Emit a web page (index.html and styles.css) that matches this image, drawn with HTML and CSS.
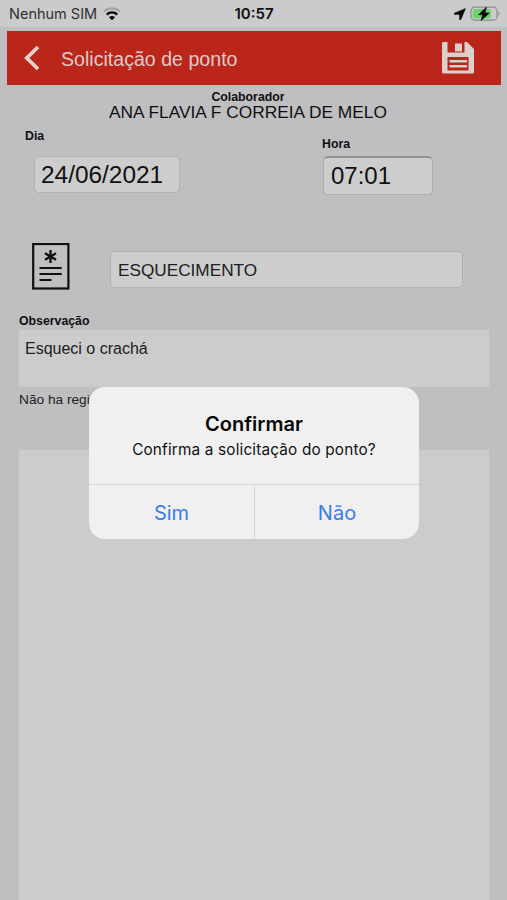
FILE: index.html
```
<!DOCTYPE html>
<html lang="pt-BR">
<head>
<meta charset="utf-8">
<title>Solicitação de ponto</title>
<link rel="stylesheet" href="styles.css">
</head>
<body>
<div class="screen">
  <div class="status">
    <div class="carrier"><span>Nenhum SIM</span>
      <svg width="18" height="14" viewBox="0 0 18 14" fill="none"><path d="M1 4.500C5.500 .2 12.500.2 17 4.500" stroke="#a3a3a3" stroke-width="2.300"/><path d="M3.700 7.600C6.800 4.800 11.200 4.800 14.300 7.600" stroke="#080808" stroke-width="2.500"/><path d="M6 10.200Q9 7.700 12 10.200L9 13.300Z" fill="#080808"/></svg>
    </div>
    <time class="clock">10:57</time>
    <div class="power">
      <svg width="12" height="12" viewBox="0 0 12 12"><path d="M11.500.5L.2 5.200L.5 6.500H5.500V11.500L6.800 11.700Z" fill="#080808" stroke="#080808" stroke-width=".5"/></svg>
      <svg width="31" height="16" viewBox="0 0 31 16"><rect x="1" y="1.200" width="26" height="13" rx="3.800" fill="#cbcbcb" stroke="#8d8d8d" stroke-width="1.200"/><rect x="2.800" y="3" width="18" height="9.400" rx="2" fill="#69d36c"/><path d="M28.500 5.500Q31 7.700 28.500 10Z" fill="#8d8d8d"/><path d="M16.500 1L8.500 8.700H12.600L11 14.800L19.400 6.900H15Z" fill="#080808" stroke="#080808" stroke-width=".5"/></svg>
    </div>
  </div>

  <header class="bar">
    <svg class="back" width="18" height="26" viewBox="0 0 18 26"><path d="M15 2L3.800 13L15 24" fill="none" stroke="#dfd3d2" stroke-width="3.800"/></svg>
    <h1>Solicitação de ponto</h1>
    <svg class="save" width="32" height="32" viewBox="0 0 32 32"><path fill="#dccfcd" fill-rule="evenodd" d="M1 0H5.500V10.500H22.500V0H25L32 7V30.500L31 31.500H1L0 30.500V1ZM5.500 15V28.500H26.500V15Z"/><path fill="#dccfcd" d="M13 1.500H20V9.500H13ZM7.500 18H25V20.500H7.500ZM7.500 23H25V25.500H7.500Z"/></svg>
  </header>

  <main>
    <div class="person"><b>Colaborador</b><span>ANA FLAVIA F CORREIA DE MELO</span></div>
    <div class="when">
      <div class="day"><b>Dia</b><div class="field date">24/06/2021</div></div>
      <div class="hour"><b>Hora</b><div class="field time">07:01</div></div>
    </div>
    <div class="reason">
      <svg width="38" height="48" viewBox="0 0 38 48" fill="none" stroke="#101012"><rect x="1.200" y="1" width="35.200" height="44.500" stroke-width="2.200"/><path d="M18.500 7V20M13 10.200L24 16.800M24 10.200L13 16.800" stroke-width="2.300"/><path d="M7.500 25H29.700M7.500 31H29.700M7.500 37H19.500" stroke-width="2.200"/></svg>
      <div class="field motive">ESQUECIMENTO</div>
    </div>
    <b class="note-label">Observação</b>
    <div class="note">Esqueci o crachá</div>
    <div class="empty">Não ha registros</div>
    <div class="list"></div>
  </main>

  <div class="alert" role="alertdialog">
    <div class="message"><h2>Confirmar</h2><p>Confirma a solicitação do ponto?</p></div>
    <div class="actions"><button>Sim</button><button>Não</button></div>
  </div>
</div>
</body>
</html>
```
FILE: styles.css
```
* { box-sizing: border-box; }
body { margin: 0; background: #bfbfc1; }
.screen {
  position: relative;
  display: flex;
  flex-direction: column;
  width: 507px;
  height: 900px;
  overflow: hidden;
  font-family: "Liberation Sans", Arial, sans-serif;
  color: #101012;
}
.status {
  display: grid;
  grid-template-columns: 1fr auto 1fr;
  align-items: center;
  height: 27px;
  padding: 0 6px 0 9px;
  background: #cbcbcb;
  font-family: Inter, sans-serif;
}
.carrier { display: flex; align-items: center; gap: 5px; font-size: 14.5px; color: #303030; white-space: nowrap; }
.carrier span { width: 89px; }
.clock { font-size: 15px; font-weight: 600; margin-right: 2px; }
.power { display: flex; justify-content: flex-end; align-items: center; gap: 4px; }
.bar {
  display: flex;
  align-items: center;
  height: 54px;
  margin: 4px 6px 0 7px;
  padding: 0 27px 0 16px;
  background: #bb261a;
}
.bar h1 { margin: 0 auto 0 20px; font-size: 19.6px; font-weight: 400; color: #dccac8; line-height: 24px; padding-top: 2px; }
main { display: flex; flex-direction: column; flex: 1; }
b { font-size: 12.3px; line-height: 14px; }
.person { display: flex; flex-direction: column; align-items: center; padding: 6px 11px 0 0; }
.person b { line-height: 13px; }
.person span { font-size: 17.33px; line-height: 16px; padding-bottom: 2px; }
.when { display: flex; height: 121px; }
.day { width: 298px; padding: 7px 0 0 25px; }
.hour { padding: 15px 0 0 24px; }
.day b, .hour b { display: block; }
.field {
  display: flex;
  align-items: center;
  border: 1px solid #b0b0b0;
  border-radius: 5px;
  background: #cdcdcd;
}
.date { width: 146px; height: 37px; margin: 13px 0 0 9px; padding: 1px 0 0 6px; font-size: 24.4px; }
.time { width: 110px; height: 39px; margin: 5px 0 0 1px; padding: 0 0 0 7px; border-top: 2px solid #929294; font-size: 24px; }
.reason { display: flex; padding: 0 44px 0 32px; height: 71px; }
.motive { flex: 1; height: 37px; margin: 8px 0 0 40px; padding: 2px 0 0 7px; font-size: 17.2px; color: #202020; }
.note-label { margin: 0 0 0 19px; height: 15px; }
.note { height: 57px; margin: 1px 18px 0 19px; padding: 9px 6px; background: #cccccc; font-size: 16px; line-height: 20px; color: #202020; }
.empty { height: 63px; padding: 5px 0 0 19px; font-size: 13.7px; line-height: 16px; color: #202020; }
.list { flex: 1; margin: 0 18px 0 19px; background: #cccccc; }
.alert {
  position: absolute;
  left: 89px;
  top: 387px;
  width: 330px;
  height: 152px;
  display: flex;
  flex-direction: column;
  overflow: hidden;
  border-radius: 16px;
  background: #f0f0f0;
  font-family: Inter, sans-serif;
  text-align: center;
}
.message { flex: 1; padding-top: 24px; }
.message h2 { margin: 0; font-size: 20px; line-height: 26px; font-weight: 600; color: #080808; }
.message p { margin: 3px 0 0; font-size: 15.3px; letter-spacing: .18px; line-height: 20px; white-space: nowrap; }
.actions { display: grid; grid-template-columns: 1fr 1fr; height: 55px; border-top: 1px solid #d5d5d5; }
.actions button { border: 0; padding: 2px 0 0; background: none; font: 400 20px Inter, sans-serif; color: #397de9; }
.actions button + button { border-left: 1px solid #d5d5d5; }
```
